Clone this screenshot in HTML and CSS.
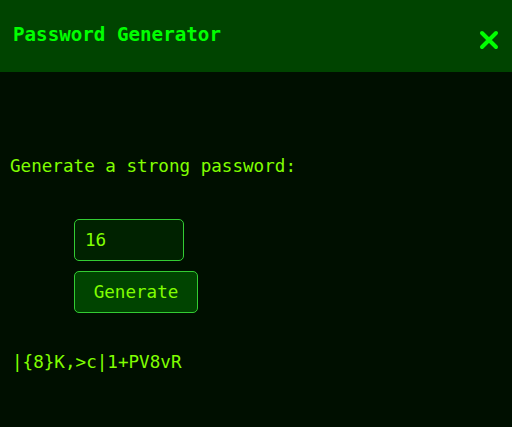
FILE: index.html
```html
<!DOCTYPE html>
<html lang="en">
  <head>
    <meta charset="UTF-8" />
    <title>Password Generator</title>
    <link rel="stylesheet" href="styles.css">
  </head>
  <body>
    <div class="header">
      <span class="titlu">Password Generator</span>
      <svg class="inchide" width="20" height="20" viewBox="0 0 20 20">
        <path d="M3 3 L17 17 M17 3 L3 17" stroke="#00ff00" stroke-width="4" stroke-linecap="round" />
      </svg>
    </div>
    <div class="continut">
      <p class="eticheta">Generate a strong password:</p>
      <div class="formular">
        <input type="number" class="lungime" value="16" />
        <button class="genereaza">Generate</button>
      </div>
      <p class="rezultat">|{8}K,&gt;c|1+PV8vR</p>
    </div>
  </body>
</html>
```

FILE: styles.css
```css
html,
body {
  margin: 0;
  background-color: #000f00;
  font-family: "DejaVu Sans Mono", monospace;
  color: #80ff00;
  height: 100%;
}

.header {
  background-color: #004400;
  height: 72px;
  display: flex;
  justify-content: space-between;
  align-items: center;
  padding: 0 13px 0 13px;
}

.titlu {
  color: #00ff00;
  font-weight: bold;
  font-size: 19.2px;
  margin-top: -3px;
}

.inchide {
  margin-top: 8px;
}

.continut {
  padding: 0 10px;
}

.eticheta {
  margin: 0;
  padding-top: 84px;
  font-size: 17.6px;
}

.formular {
  display: flex;
  flex-direction: column;
  align-items: flex-start;
  gap: 10px;
  margin: 43px 0 0 64px;
}

.lungime,
.genereaza {
  font-family: "DejaVu Sans Mono", monospace;
  font-size: 17.6px;
  color: #80ff00;
  border: 1px solid #33cc33;
  border-radius: 5px;
  height: 42px;
  box-sizing: border-box;
}

.lungime {
  width: 110px;
  background-color: #002200;
  padding: 0 10px;
  -moz-appearance: textfield;
}

.lungime::-webkit-inner-spin-button {
  -webkit-appearance: none;
}

.genereaza {
  width: 124px;
  background-color: #004400;
}

.rezultat {
  margin: 39px 0 0 2px;
  font-size: 17.6px;
}
```
